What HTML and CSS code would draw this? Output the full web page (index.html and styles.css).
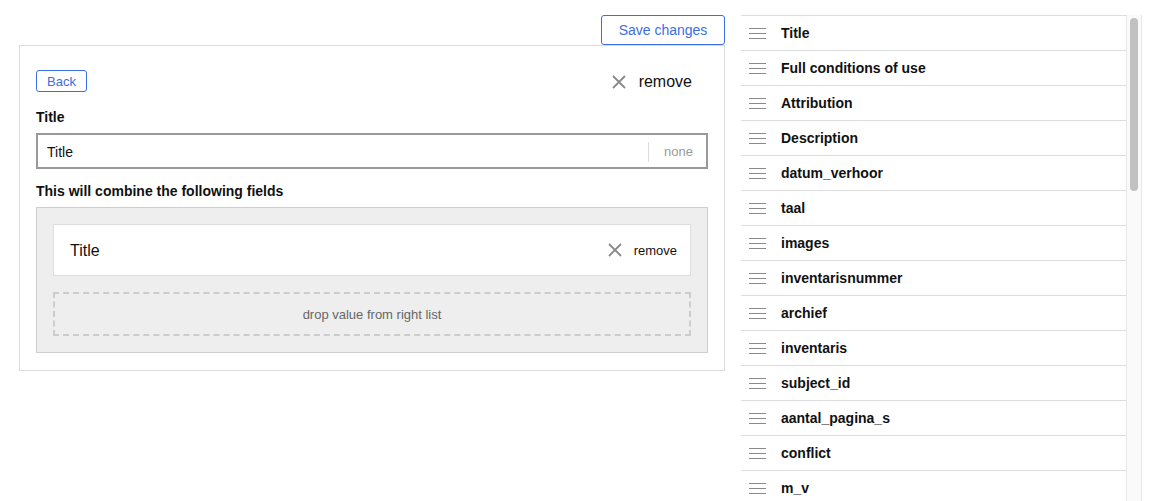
FILE: index.html
```html
<!DOCTYPE html>
<html lang="en">
<head>
<meta charset="utf-8">
<title>Combine fields</title>
<link rel="stylesheet" href="styles.css">
</head>
<body>
<div class="page">
  <div class="editor">
    <button class="btn btn-save">Save changes</button>
    <div class="panel">
      <div class="panel-head">
        <button class="btn btn-back">Back</button>
        <div class="remove remove-lg">
          <svg class="x-icon" width="14" height="14" viewBox="0 0 14 14"><path d="M1 1L13 13M13 1L1 13" stroke="#8a8a8a" stroke-width="1.8" fill="none"/></svg>
          <span>remove</span>
        </div>
      </div>
      <div class="label label-first">Title</div>
      <div class="select">
        <span class="select-value">Title</span>
        <span class="select-none">none</span>
      </div>
      <div class="label label-second">This will combine the following fields</div>
      <div class="combine">
        <div class="card">
          <span class="card-title">Title</span>
          <div class="remove remove-sm">
            <svg class="x-icon" width="14" height="14" viewBox="0 0 14 14"><path d="M1 1L13 13M13 1L1 13" stroke="#8a8a8a" stroke-width="1.8" fill="none"/></svg>
            <span>remove</span>
          </div>
        </div>
        <div class="dropzone">drop value from right list</div>
      </div>
    </div>
  </div>
  <div class="fields">
    <ul class="field-list">
      <li class="field"><svg class="grip" width="17" height="11" viewBox="0 0 17 11"><path d="M0 0.5H17M0 5.5H17M0 10.5H17" stroke="#8a8a8a" stroke-width="1"/></svg><span>Title</span></li>
      <li class="field"><svg class="grip" width="17" height="11" viewBox="0 0 17 11"><path d="M0 0.5H17M0 5.5H17M0 10.5H17" stroke="#8a8a8a" stroke-width="1"/></svg><span>Full conditions of use</span></li>
      <li class="field"><svg class="grip" width="17" height="11" viewBox="0 0 17 11"><path d="M0 0.5H17M0 5.5H17M0 10.5H17" stroke="#8a8a8a" stroke-width="1"/></svg><span>Attribution</span></li>
      <li class="field"><svg class="grip" width="17" height="11" viewBox="0 0 17 11"><path d="M0 0.5H17M0 5.5H17M0 10.5H17" stroke="#8a8a8a" stroke-width="1"/></svg><span>Description</span></li>
      <li class="field"><svg class="grip" width="17" height="11" viewBox="0 0 17 11"><path d="M0 0.5H17M0 5.5H17M0 10.5H17" stroke="#8a8a8a" stroke-width="1"/></svg><span>datum_verhoor</span></li>
      <li class="field"><svg class="grip" width="17" height="11" viewBox="0 0 17 11"><path d="M0 0.5H17M0 5.5H17M0 10.5H17" stroke="#8a8a8a" stroke-width="1"/></svg><span>taal</span></li>
      <li class="field"><svg class="grip" width="17" height="11" viewBox="0 0 17 11"><path d="M0 0.5H17M0 5.5H17M0 10.5H17" stroke="#8a8a8a" stroke-width="1"/></svg><span>images</span></li>
      <li class="field"><svg class="grip" width="17" height="11" viewBox="0 0 17 11"><path d="M0 0.5H17M0 5.5H17M0 10.5H17" stroke="#8a8a8a" stroke-width="1"/></svg><span>inventarisnummer</span></li>
      <li class="field"><svg class="grip" width="17" height="11" viewBox="0 0 17 11"><path d="M0 0.5H17M0 5.5H17M0 10.5H17" stroke="#8a8a8a" stroke-width="1"/></svg><span>archief</span></li>
      <li class="field"><svg class="grip" width="17" height="11" viewBox="0 0 17 11"><path d="M0 0.5H17M0 5.5H17M0 10.5H17" stroke="#8a8a8a" stroke-width="1"/></svg><span>inventaris</span></li>
      <li class="field"><svg class="grip" width="17" height="11" viewBox="0 0 17 11"><path d="M0 0.5H17M0 5.5H17M0 10.5H17" stroke="#8a8a8a" stroke-width="1"/></svg><span>subject_id</span></li>
      <li class="field"><svg class="grip" width="17" height="11" viewBox="0 0 17 11"><path d="M0 0.5H17M0 5.5H17M0 10.5H17" stroke="#8a8a8a" stroke-width="1"/></svg><span>aantal_pagina_s</span></li>
      <li class="field"><svg class="grip" width="17" height="11" viewBox="0 0 17 11"><path d="M0 0.5H17M0 5.5H17M0 10.5H17" stroke="#8a8a8a" stroke-width="1"/></svg><span>conflict</span></li>
      <li class="field"><svg class="grip" width="17" height="11" viewBox="0 0 17 11"><path d="M0 0.5H17M0 5.5H17M0 10.5H17" stroke="#8a8a8a" stroke-width="1"/></svg><span>m_v</span></li>
    </ul>
    <div class="scrollbar"><div class="scrollbar-thumb"></div></div>
  </div>
</div>
</body>
</html>
```

FILE: styles.css
```css
* { box-sizing: border-box; }

html, body {
  margin: 0;
  padding: 0;
  background: #fff;
  overflow: hidden;
}

body {
  font-family: "Liberation Sans", Arial, Helvetica, sans-serif;
  color: #111;
}

.page {
  display: flex;
  align-items: flex-start;
  gap: 16px;
  padding: 15px 0 0 19px;
  height: 501px;
}

.editor {
  width: 706px;
  display: flex;
  flex-direction: column;
  align-items: flex-end;
}

.btn {
  font-family: inherit;
  background: #fff;
  color: #3a6ee8;
  border: 1px solid #3a6ee8;
  border-radius: 3px;
  cursor: pointer;
  line-height: 1;
}

.btn-save {
  height: 30px;
  width: 124px;
  padding: 0;
  font-size: 14px;
}

.panel {
  width: 706px;
  border: 1px solid #dcdcdc;
  padding: 24px 16px 17px;
}

.panel-head {
  height: 22px;
  display: flex;
  align-items: center;
  justify-content: space-between;
}

.btn-back {
  height: 22px;
  width: 51px;
  padding: 0;
  font-size: 13px;
}

.remove {
  display: flex;
  align-items: center;
  color: #111;
}

.remove-lg {
  gap: 13px;
  font-size: 16px;
  margin-right: 16px;
  padding-top: 2px;
}

.remove-sm {
  gap: 12px;
  font-size: 13px;
  margin-right: 1px;
}

.x-icon { display: block; }

.label {
  font-size: 14px;
  font-weight: bold;
  line-height: 17px;
  margin-bottom: 7px;
}

.label-first { margin-top: 17px; }
.label-second { margin-top: 14px; }

.select {
  height: 36px;
  border: 2px solid #999;
  display: flex;
  align-items: center;
  padding-left: 9px;
  padding-top: 1px;
  font-size: 14px;
}

.select-value { flex: 1; }

.select-none {
  height: 20px;
  line-height: 20px;
  border-left: 1px solid #ddd;
  padding: 0 13px 0 15px;
  font-size: 13px;
  color: #999;
}

.combine {
  background: #eee;
  border: 1px solid #cfcfcf;
  padding: 16px;
  display: flex;
  flex-direction: column;
  gap: 16px;
}

.card {
  height: 52px;
  background: #fff;
  border: 1px solid #ddd;
  display: flex;
  align-items: center;
  justify-content: space-between;
  padding: 0 12px 0 16px;
}

.card-title { font-size: 16px; padding-top: 1px; }

.dropzone {
  height: 44px;
  border: 2px dashed #ccc;
  display: flex;
  align-items: center;
  justify-content: center;
  font-size: 13px;
  color: #666;
}

.fields {
  display: flex;
  align-items: stretch;
  height: 486px;
  overflow: hidden;
}

.field-list {
  width: 385px;
  list-style: none;
  margin: 0;
  padding: 0;
  border-top: 1px solid #ddd;
}

.scrollbar {
  width: 16px;
  background: #fafafa;
  border-left: 1px solid #e8e8e8;
  border-right: 1px solid #e8e8e8;
  padding: 3px 0 0 3px;
}

.scrollbar-thumb {
  width: 8px;
  height: 173px;
  background: #c1c1c1;
  border-radius: 4px;
}

.field {
  height: 35px;
  border-bottom: 1px solid #ddd;
  display: flex;
  align-items: center;
  gap: 15px;
  padding-left: 8px;
  font-size: 14px;
  font-weight: bold;
  color: #111;
}

.grip { display: block; flex: none; }
```
